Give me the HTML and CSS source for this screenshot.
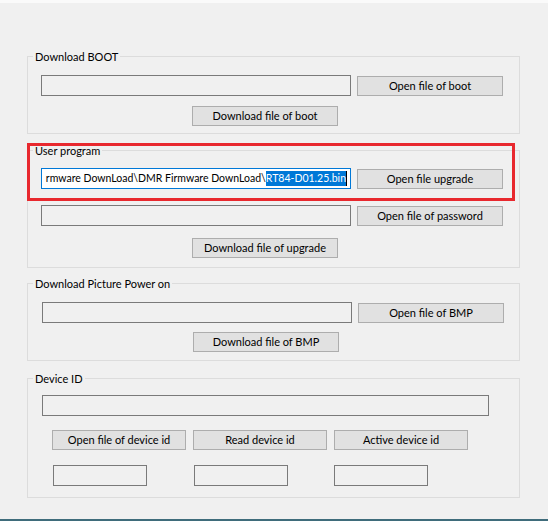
FILE: index.html
```html
<!DOCTYPE html>
<html>
<head>
<meta charset="utf-8">
<link rel="stylesheet" href="styles.css">
</head>
<body>
<div class="topbar"></div>
<div class="content">
  <fieldset class="group g1">
    <legend>Download BOOT</legend>
    <div class="row"><div class="field"></div><button class="btn side">Open file of boot</button></div>
    <button class="btn dl">Download file of boot</button>
  </fieldset>

  <fieldset class="group g2">
    <legend>User program</legend>
    <div class="row"><div class="field active"><span class="path">rmware DownLoad\DMR Firmware DownLoad\</span><span class="sel">RT84-D01.25.bin</span><span class="caret"></span></div><button class="btn side">Open file upgrade</button></div>
    <div class="row r2"><div class="field"></div><button class="btn side">Open file of password</button></div>
    <button class="btn dl">Download file of upgrade</button>
  </fieldset>

  <fieldset class="group g3">
    <legend>Download Picture Power on</legend>
    <div class="row"><div class="field"></div><button class="btn side">Open file of BMP</button></div>
    <button class="btn dl">Download file of BMP</button>
  </fieldset>

  <fieldset class="group g4">
    <legend>Device ID</legend>
    <div class="field wide"></div>
    <div class="trio">
      <button class="btn">Open file of device id</button>
      <button class="btn">Read device id</button>
      <button class="btn">Active device id</button>
    </div>
    <div class="trio small">
      <div class="field"></div>
      <div class="field"></div>
      <div class="field"></div>
    </div>
  </fieldset>
</div>
<div class="taskbar"></div>
<div class="mark"></div>
</body>
</html>
```

FILE: styles.css
```css
html, body {
  margin: 0;
  padding: 0;
}
body {
  width: 548px;
  height: 521px;
  overflow: hidden;
  position: relative;
  background: #f0f0f0;
  font-family: Lato, "Noto Sans", sans-serif;
  font-size: 11px;
  color: #000;
  display: flex;
  flex-direction: column;
}
.topbar {
  height: 3px;
  background: #fafafa;
}
.content {
  padding: 45px 0 0 27px;
}
.group {
  box-sizing: border-box;
  width: 493px;
  margin: 0;
  border: 1px solid #dcdcdc;
  padding: 0 0 0 13px;
}
.group legend {
  margin-left: -8px;
  padding: 0 2px;
  line-height: 16px;
  height: 16px;
  position: relative;
  top: 1px;
}
.g3 legend, .g4 legend {
  margin-left: -9px;
}
.row {
  display: flex;
  align-items: flex-start;
  gap: 6px;
}
.field {
  box-sizing: border-box;
  width: 310px;
  height: 21px;
  border: 1px solid #7a7a7a;
  background: #f0f0f0;
}
.btn {
  box-sizing: border-box;
  width: 146px;
  height: 20px;
  margin: 0;
  padding: 0;
  border: 1px solid #adadad;
  background: #e1e1e1;
  font: inherit;
  line-height: 16px;
  color: #000;
}
.side {
  margin-top: 1px;
}
.dl {
  display: block;
  margin-left: 151px;
}
.field.active {
  background: #fff;
  border-color: #0078d7;
  display: flex;
  justify-content: flex-end;
  align-items: center;
  overflow: hidden;
  white-space: nowrap;
  padding-right: 3px;
  color: #000;
  line-height: 15px;
  font-size: 10.5px;
}
.path, .sel {
  flex: none;
}
.sel {
  background: #0078d7;
  color: #fff;
}
.caret {
  width: 1px;
  height: 15px;
  background: #000;
  flex: none;
}

/* group 1 */
.g1 .row { margin-top: 11px; }
.g1 .dl { margin-top: 10px; }
.g1 { padding-bottom: 7px; }

/* group 2 */
.g2 { margin-top: 8px; padding-bottom: 9px; }
.g2 .row { margin-top: 10px; }
.g2 .row.r2 { margin-top: 16px; }
.g2 .dl { margin-top: 12px; }

/* group 3 */
.g3 { margin-top: 7px; padding-left: 14px; padding-bottom: 8px; }
.g3 .row { margin-top: 11px; }
.g3 .dl { margin-top: 9px; }

/* group 4 */
.g4 { margin-top: 9px; padding-left: 14px; padding-bottom: 11px; }
.g4 .wide { width: 447px; margin-top: 9px; }
.trio {
  display: grid;
  grid-template-columns: 134px 134px 134px;
  column-gap: 7px;
  margin-left: 10px;
  margin-top: 14px;
}
.trio .btn {
  width: 134px;
}
.trio.small {
  margin-top: 15px;
}
.trio.small .field {
  width: 94px;
  margin-left: 1px;
}
.trio.small .field:last-child {
  margin-left: 0;
}

.taskbar {
  margin-top: auto;
  height: 2px;
  background: #3f6c7b;
}
.mark {
  position: absolute;
  left: 27px;
  top: 143px;
  width: 488px;
  height: 58px;
  box-sizing: border-box;
  border: 3px solid #e8282e;
}
```
